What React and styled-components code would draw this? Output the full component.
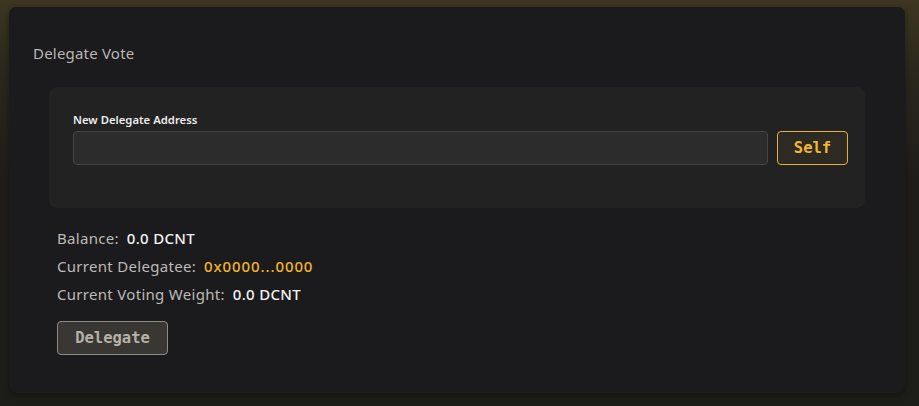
import React from "react";
import styled, { createGlobalStyle } from "styled-components";

const Global = createGlobalStyle`
  html, body { margin: 0; padding: 0; }
  body {
    width: 919px;
    height: 406px;
    overflow: hidden;
    background: linear-gradient(180deg, #3d3620 0%, #2a271c 18%, #1e1d19 45%, #1d1d19 100%);
    font-family: "Noto Sans", "Open Sans", sans-serif;
  }
`;

const Page = styled.div`
  padding: 7px 14px 13px 9px;
`;

const Card = styled.section`
  background: #1b1a1c;
  border-radius: 7px;
  box-shadow: 0 2px 6px rgba(0, 0, 0, 0.35);
  padding: 36px 0 38px;
  display: flex;
  flex-direction: column;
`;

const Title = styled.h2`
  margin: 0 0 24px 24px;
  font-size: 15px;
  line-height: 20px;
  font-weight: 400;
  color: #b9b7b4;
  letter-spacing: 0.2px;
`;

const FieldBox = styled.div`
  margin: 0 40px;
  background: #222222;
  border-radius: 8px;
  padding: 25px 17px 43px 24px;
  display: flex;
  flex-direction: column;
  gap: 3px;
`;

const Label = styled.label`
  font-size: 11.3px;
  line-height: 16px;
  font-weight: 600;
  color: #ececec;
`;

const InputRow = styled.div`
  display: flex;
  gap: 9px;
  align-items: stretch;
`;

const Input = styled.input`
  flex: 1;
  height: 34px;
  box-sizing: border-box;
  background: #2c2c2c;
  border: 1px solid #444444;
  border-radius: 4px;
  outline: none;
  color: #eee;
  padding: 0 10px;
`;

const MonoButton = styled.button`
  box-sizing: border-box;
  height: 34px;
  padding: 0;
  border-radius: 4px;
  font-family: "DejaVu Sans Mono", "Liberation Mono", monospace;
  font-weight: 700;
  font-size: 15.5px;
  cursor: pointer;
  background: ${(p) => (p.$variant === "gold" ? "#2d2a24" : "#393733")};
  border: 1px solid ${(p) => (p.$variant === "gold" ? "#e6b23c" : "#8d8b86")};
  color: ${(p) => (p.$variant === "gold" ? "#f1b52e" : "#b5b1a6")};
  width: ${(p) => p.$width}px;
`;

const Info = styled.div`
  margin: 16px 48px 0;
  display: flex;
  flex-direction: column;
  align-items: flex-start;
`;

const Line = styled.div`
  font-size: 15px;
  line-height: 28px;
  color: #bdbbb8;
  letter-spacing: 0.3px;
`;

const Value = styled.span`
  margin-left: 8px;
  font-weight: 500;
  color: ${(p) => (p.$gold ? "#f2b52c" : "#f2f2f2")};
  letter-spacing: ${(p) => (p.$gold ? "0.9px" : "0.3px")};
`;

const Actions = styled.div`
  margin-top: 13px;
`;

export default function App() {
  return (
    <>
      <Global />
      <Page>
        <Card>
          <Title>Delegate Vote</Title>
          <FieldBox>
            <Label>New Delegate Address</Label>
            <InputRow>
              <Input />
              <MonoButton $variant="gold" $width={71}>Self</MonoButton>
            </InputRow>
          </FieldBox>
          <Info>
            <Line>
              Balance:<Value>0.0 DCNT</Value>
            </Line>
            <Line>
              Current Delegatee:<Value $gold>0x0000...0000</Value>
            </Line>
            <Line>
              Current Voting Weight:<Value>0.0 DCNT</Value>
            </Line>
            <Actions>
              <MonoButton $width={111}>Delegate</MonoButton>
            </Actions>
          </Info>
        </Card>
      </Page>
    </>
  );
}
